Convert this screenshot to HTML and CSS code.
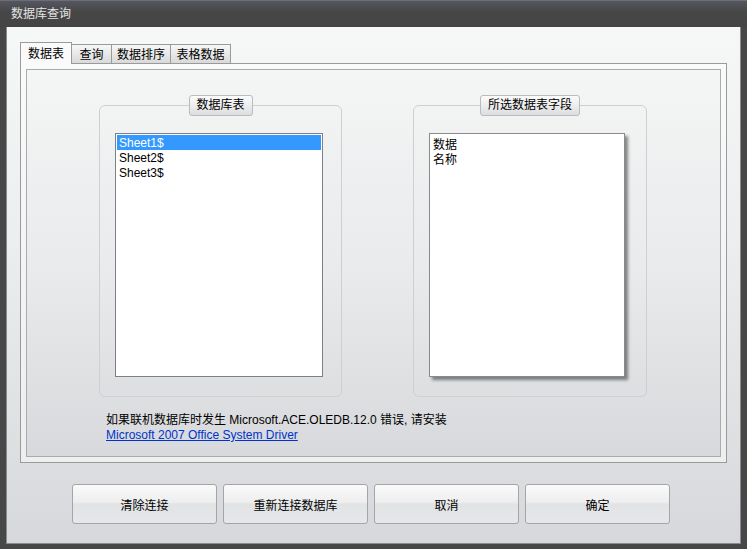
FILE: index.html
```html
<!DOCTYPE html>
<html lang="zh-CN">
<head>
    <meta charset="UTF-8">
    <title>数据库查询</title>
    <link rel="stylesheet" href="styles.css">
</head>
<body>

<div class="window">
    <div class="titlebar">数据库查询</div>

    <div class="client">
        <div class="tabs">
            <div class="tab active">数据表</div>
            <div class="tab tab-query">查询</div>
            <div class="tab tab-sort">数据排序</div>
            <div class="tab tab-grid">表格数据</div>
        </div>

        <div class="tab-panel">
            <div class="panel-inner">
                <div class="groups">
                    <div class="group group-left">
                        <div class="group-title">数据库表</div>
                        <div class="listbox">
                            <div class="list-item selected">Sheet1$</div>
                            <div class="list-item">Sheet2$</div>
                            <div class="list-item">Sheet3$</div>
                        </div>
                    </div>
                    <div class="group group-right">
                        <div class="group-title">所选数据表字段</div>
                        <div class="listbox fields">
                            <div class="list-item">数据</div>
                            <div class="list-item">名称</div>
                        </div>
                    </div>
                </div>

                <div class="notice">
                    <p>如果联机数据库时发生 Microsoft.ACE.OLEDB.12.0 错误, 请安装</p>
                    <a href="#">Microsoft 2007 Office System Driver</a>
                </div>
            </div>
        </div>

        <div class="buttons">
            <button>清除连接</button>
            <button>重新连接数据库</button>
            <button>取消</button>
            <button>确定</button>
        </div>
    </div>
</div>

</body>
</html>
```

FILE: styles.css
```css
body {
    margin: 0;
    font-family: "Liberation Sans", "Noto Sans CJK SC", sans-serif;
    font-size: 12px;
    color: #000;
}
.window {
    width: 747px;
    height: 549px;
    background: #474747;
    display: flex;
    flex-direction: column;
    box-sizing: border-box;
    border-top: 1px solid #6b6e7a;
}
.titlebar {
    height: 26px;
    line-height: 26px;
    padding-left: 11px;
    color: #e4e4e4;
    background: linear-gradient(#55575f, #474747 40%, #444444);
}
.client {
    flex: 1;
    margin: 0 6px 5px 6px;
    padding: 14px 0 0 13px;
    background: linear-gradient(#f6f7f7, #eceeef 40%, #d6d8db);
    border: 1px solid #8a8a8a;
    border-top: none;
}
.tabs {
    display: flex;
    align-items: flex-end;
    height: 22px;
}
.tab {
    height: 18px;
    line-height: 20px;
    text-align: center;
    box-sizing: content-box;
    border: 1px solid #9a9a9a;
    border-bottom: none;
    margin-right: -1px;
    background: linear-gradient(#f7f7f7, #d9d9d9);
}
.tab.active {
    width: 50px;
    height: 21px;
    line-height: 22px;
    background: #fafafa;
    position: relative;
    z-index: 1;
    margin-bottom: -1px;
}
.tab-query {
    width: 39px;
}
.tab-sort {
    width: 58px;
}
.tab-grid {
    width: 59px;
}
.tab-panel {
    width: 707px;
    height: 400px;
    box-sizing: border-box;
    border: 1px solid #9a9a9a;
    padding: 5px;
    background: linear-gradient(#fafafa, #eeeeef);
}
.panel-inner {
    height: 100%;
    box-sizing: border-box;
    border: 1px solid #a9abad;
    background: linear-gradient(#f4f5f5, #e9ebec 50%, #d7d9dc);
    padding: 35px 0 0 72px;
}
.groups {
    display: flex;
    gap: 71px;
}
.group {
    position: relative;
    height: 292px;
    box-sizing: border-box;
    border: 1px solid #cdd0d3;
    border-radius: 6px;
    padding: 27px 0 0 15px;
}
.group-left {
    width: 243px;
}
.group-right {
    width: 234px;
}
.group-title {
    position: absolute;
    top: -11px;
    left: 50%;
    transform: translateX(-50%);
    height: 19px;
    line-height: 19px;
    padding: 0 7px;
    white-space: nowrap;
    border: 1px solid #b9bbbe;
    border-radius: 3px;
    background: linear-gradient(#fbfbfb, #e9eaeb 60%, #dcdde0);
}
.listbox {
    width: 208px;
    height: 244px;
    box-sizing: border-box;
    border: 1px solid #7d8088;
    background: #fff;
    padding: 1px;
}
.listbox.fields {
    width: 196px;
    padding: 3px 1px;
    border-color: #8a8a8a;
    box-shadow: 3px 3px 3px rgba(0, 0, 0, 0.45);
}
.list-item {
    height: 15px;
    line-height: 16px;
    padding-left: 2px;
}
.list-item.selected {
    background: #3399ff;
    color: #fff;
}
.notice {
    margin: 16px 0 0 7px;
    line-height: 15px;
}
.notice p {
    margin: 0;
}
.notice a {
    color: #0033cc;
    text-decoration: underline;
}
.buttons {
    display: flex;
    gap: 6px;
    margin: 21px 0 0 52px;
}
.buttons button {
    width: 145px;
    height: 40px;
    font-family: inherit;
    font-size: 12px;
    color: #000;
    border: 1px solid #a3a5a8;
    border-radius: 3px;
    background: linear-gradient(#fafafa, #eeeeef 45%, #e2e3e5 50%, #e6e7e9);
    padding: 0;
}
```
